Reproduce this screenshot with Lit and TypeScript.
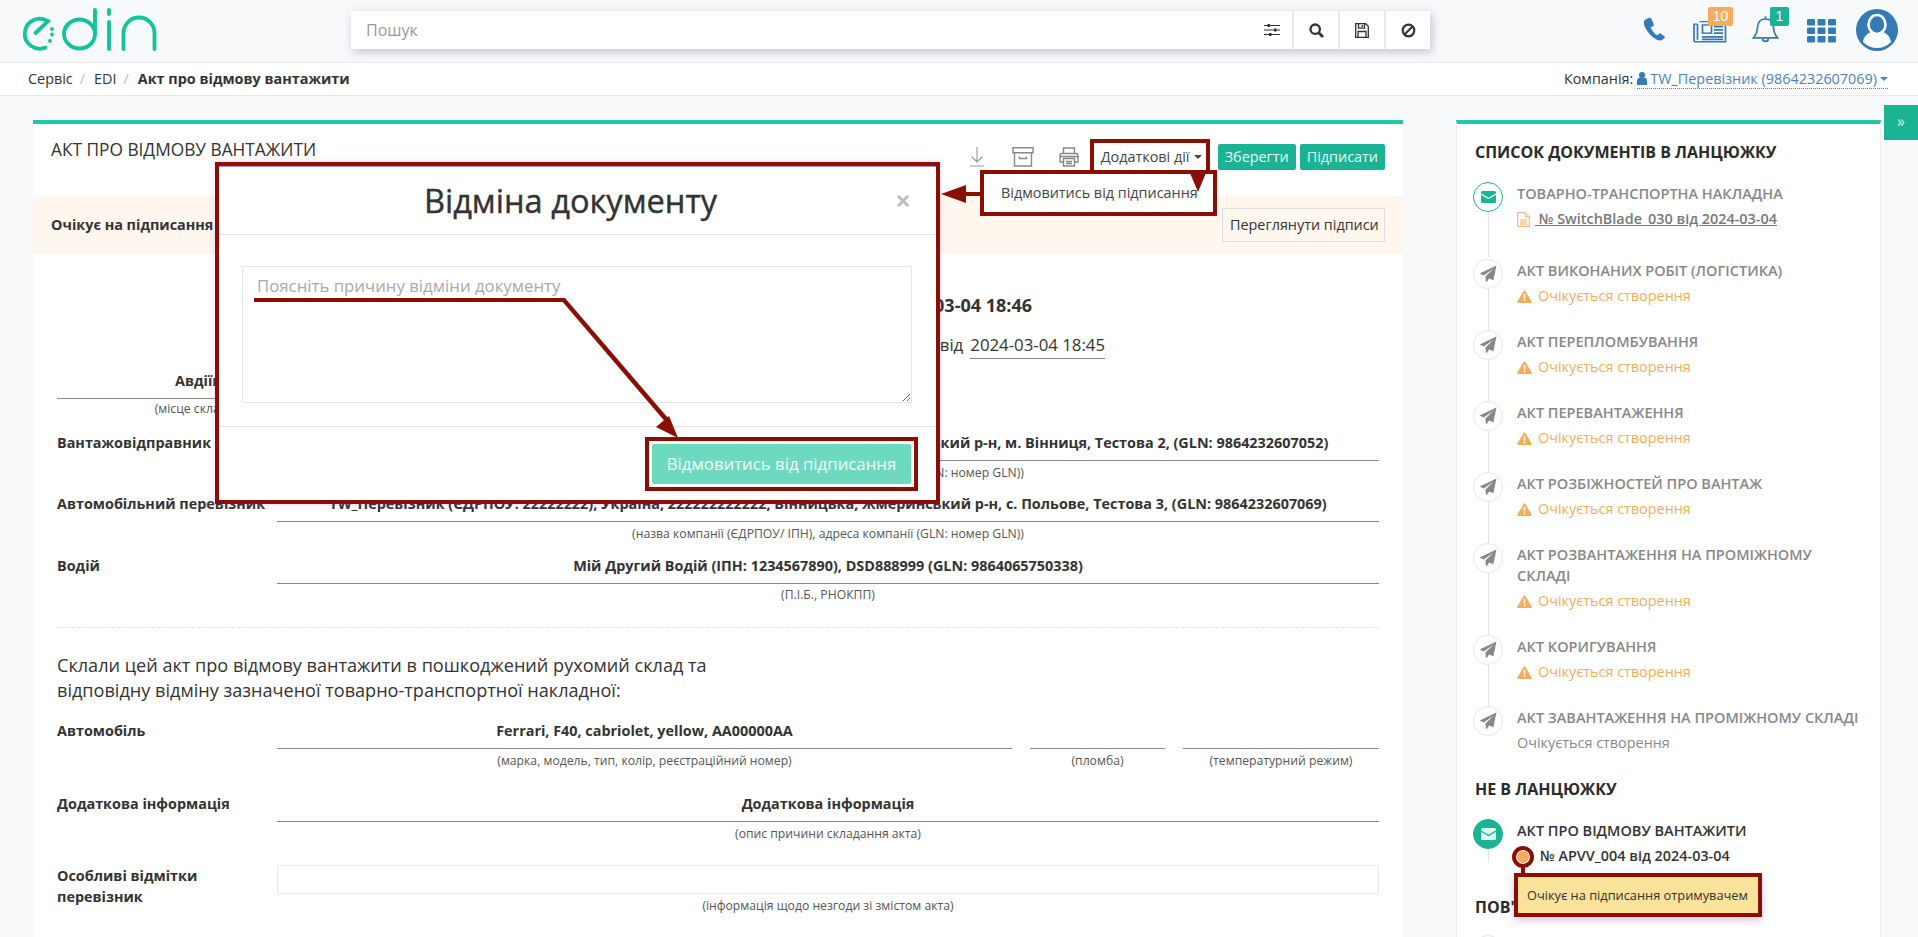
import { LitElement, html, css, svg } from 'lit';
import { customElement } from 'lit/decorators.js';

const teal = '#1ab394';
const navy = '#337ab7';

//
// icons, all hand drawn in a small box
//
const planeIcon = html`<svg width="18" height="18" viewBox="0 0 16 16"><path d="M15.5.5 12.8 13.6 8.9 11.9 7 15l-.9-.3-.4-4.4L13 3 4.3 9.3.5 7.6z" fill="#888"/></svg>`;
const mailIcon = (fill: string, cut: string) => html`<svg width="15" height="12" viewBox="0 0 15 12"><rect width="15" height="12" rx="1.5" fill="${fill}"/><path d="M0 3 7.5 7.5 15 3" fill="none" stroke="${cut}" stroke-width="1.4"/></svg>`;
const warnIcon = html`<svg width="15" height="13" viewBox="0 0 15 13"><path d="M7.5.3c.4 0 .7.2.9.6l6.3 10.6c.4.7 0 1.5-.9 1.5H1.2c-.9 0-1.3-.8-.9-1.5L6.6.9c.2-.4.5-.6.9-.6z" fill="#f8ac59"/><path d="M6.6 4h1.8l-.2 4.6H6.8zM6.7 9.6h1.6v1.6H6.7z" fill="#fff"/></svg>`;
const fileIcon = html`<svg width="13" height="15" viewBox="0 0 13 15" fill="none" stroke="#f8ac59" stroke-width="1"><path d="M.7.7h7.6l4 4v9.6H.7zM8.3.7v4h4M3 8h7M3 10h7M3 12h7"/></svg>`;

const logo = html`<svg class="logo" width="150" height="60" viewBox="10 0 150 60" fill="none" stroke="#12c39b" stroke-width="3.8" stroke-linecap="round">
  <path d="M35.5 33 48 21.2A15 15 0 1 0 45.5 47.6"/>
  <path d="M52 29v.1M52 34.4v.1M50 41v.1"/>
  <path d="M95 10V34a15.5 14.5 0 1 1-31 0 15.5 14.5 0 0 1 31 0"/>
  <path d="M109 10v4M109 22v27"/>
  <path d="M123.5 49V33a15.5 15.5 0 0 1 31 0V49"/>
</svg>`;

const searchIcons = [
  html`<svg width="16" height="14" viewBox="0 0 16 14" stroke="#333" fill="#333"><path d="M0 2.5h16M0 7h16M0 11.5h16" stroke-width="1"/><rect x="3.5" y="1" width="2.5" height="3" stroke="none"/><rect x="10" y="5.5" width="2.5" height="3" stroke="none"/><rect x="5" y="10" width="2.5" height="3" stroke="none"/></svg>`,
  html`<svg width="15" height="15" viewBox="0 0 15 15" fill="none" stroke="#333"><circle cx="6.2" cy="6.2" r="4.7" stroke-width="2.3"/><path d="M9.8 9.8 14 14" stroke-width="2.8"/></svg>`,
  html`<svg width="14" height="15" viewBox="0 0 14 15" fill="none" stroke="#333" stroke-width="1.3"><path d="M.7.7h10l2.6 2.6v11H.7z"/><path d="M3.5 1v4.2h6V1M3 14V8.5h8V14"/><path d="M7.2 2v2" stroke-width="1.5"/></svg>`,
  html`<svg width="15" height="15" viewBox="0 0 15 15" fill="none" stroke="#333" stroke-width="2.2"><circle cx="7.5" cy="7.5" r="5.8"/><path d="M3.5 11.5 11.5 3.5"/></svg>`,
];

const phoneIcon = html`<svg width="23" height="24" viewBox="0 0 25 29" preserveAspectRatio="none"><path d="M5.8 1.2 2.2 3.2C.6 4.300.4 7.500 1.900 11.500 4 17 8.800 23.600 14 26.900c2.800 1.700 5 1.800 6.400.8l3-2.300c.7-.6.6-1.300 0-1.900l-3.900-3.400c-.6-.5-1.200-.4-1.800 0l-2 1.500c-.5.300-1 .2-1.500-.2-2.300-1.900-4.500-5.200-5.600-8-.2-.5-.1-1 .4-1.300l2.200-1.300c.6-.4.800-1 .5-1.700L9 1.800c-.7-.9-2-1.300-3.200-.6z" fill="${navy}"/></svg>`;
const newsIcon = html`<svg width="34" height="23" viewBox="0 0 34 28" preserveAspectRatio="none" fill="none" stroke="${navy}" stroke-width="1.7"><path d="M6.500 2h26v24.500H3A2 2 0 0 1 1 24.500V5h3.500M4.500 5V24"/><rect x="9.500" y="6" width="9" height="10"/><path d="M21 8h9M21 12h9M21 16h9M9 20.500h21M9 23.500h21" stroke-width="2"/></svg>`;
const bellIcon = html`<svg width="27" height="29" viewBox="0 0 29 33" preserveAspectRatio="none" fill="none" stroke="${navy}" stroke-width="1.8"><path d="M14.500 1.500v3M14.500 4.500c-5.500 0-8.200 4-8.500 9-.3 6-1.800 9.500-4.500 12.500h26C24.800 23 23.300 19.500 23 13.500c-.3-5-3-9-8.500-9z"/><path d="M11.500 27a3 3 0 0 0 6 0" stroke-width="2"/></svg>`;
const gridIcon = html`<svg width="29" height="24" viewBox="0 0 29 24" fill="${navy}">${[0, 8.5, 17].map((y) => [0, 10.5, 21].map((x) => svg`<rect x="${x}" y="${y}" width="8" height="6.5" rx="1.2"/>`))}</svg>`;
const avatarIcon = html`<svg width="42" height="42" viewBox="0 0 42 42"><circle cx="21" cy="21" r="21" fill="${navy}"/><ellipse cx="21" cy="15.500" rx="8.500" ry="9.500" fill="none" stroke="#fff" stroke-width="2.6"/><path d="M7 33c1-6 5-9.500 9-10 2.500 2 7.500 2 10 0 4 .5 8 4 9 10a19.500 19.500 0 0 1-28 0z" fill="#fff"/></svg>`;

const downloadIcon = html`<svg width="16" height="20" viewBox="0 0 16 20" fill="none" stroke="#999" stroke-width="1.1"><path d="M8 0v15M2.500 9.500 8 15l5.500-5.500M1 19h14"/></svg>`;
const archiveIcon = html`<svg width="22" height="20" viewBox="0 0 22 20" fill="none" stroke="#888" stroke-width="1.4"><path d="M1 .8h20v5H1zM2.500 5.800V19h17V5.800M7.500 9.500v2h7v-2"/></svg>`;
const printIcon = html`<svg width="20" height="20" viewBox="0 0 20 20" fill="none" stroke="#888" stroke-width="1.4"><path d="M4.500 6.500V1h11v5.500M4.500 15H1V8a1.500 1.500 0 0 1 1.500-1.500h15A1.500 1.500 0 0 1 19 8v7h-3.500"/><path d="M4.500 11.500h11V19h-11zM7 14.500h6M7 16.500h6M1 9.500h18"/></svg>`;

// chain list, on the right
const chain = [
  { title: 'Акт виконаних робіт (логістика)', warn: true },
  { title: 'Акт переплом' + 'бування', warn: true },
  { title: 'Акт перевантаження', warn: true },
  { title: 'Акт розбіжностей про вантаж', warn: true },
  { title: 'Акт розвантаження на проміжному складі', warn: true },
  { title: 'Акт коригування', warn: true },
  { title: 'Акт завантаження на проміжному складі', warn: false },
];

const sender = 'TW_Відправник (ЄДРПОУ: 1111111111), Україна, 111111111111, Вінницька, Вінницький р-н, м. Вінниця, Тестова 2, (GLN: 9864232607052)';
const carrier = 'TW_Перевізник (ЄДРПОУ: 22222222), Україна, 222222222222, Вінницька, Жмеринський р-н, с. Польове, Тестова 3, (GLN: 9864232607069)';
const companyHint = '(назва компанії (ЄДРПОУ/ ІПН), адреса компанії (GLN: номер GLN))';

@customElement('app-root')
export class AppRoot extends LitElement {
  static styles = css`
    :host {
      display: block;
      height: 937px;
      position: relative;
      overflow: hidden;
      background: #f8f9fb;
      color: #333;
      font: 14.4px/20px "Open Sans", sans-serif;
    }
    * { box-sizing: border-box; }

    .topbar {
      height: 63px;
      display: flex;
      align-items: flex-start;
      border-bottom: 1px solid #e7e8ec;
    }
    .logo { display: block; flex: none; margin: 0 0 0 10px; }
    .search {
      width: 1079px;
      height: 38px;
      margin: 11px 0 0 191px;
      flex: none;
      display: flex;
      background: #fff;
      box-shadow: 2px 3px 9px rgba(90, 95, 130, .35);
    }
    .search input {
      flex: 1;
      min-width: 0;
      border: 0;
      outline: 0;
      padding: 0 15px;
      background: transparent;
      font: 16px "Open Sans", sans-serif;
    }
    .search input::placeholder { color: #999; opacity: 1; }
    .search button {
      width: 46px;
      padding: 0;
      background: #fff;
      border: 0;
      border-left: 2px solid #e9e9ec;
      display: flex;
      align-items: center;
      justify-content: center;
    }
    .search button:first-of-type { border-left: 0; padding-left: 5px; }
    .tools { display: flex; align-items: flex-start; margin-left: 212px; }
    .tool { position: relative; display: flex; align-items: center; justify-content: center; }
    .tool.phone { width: 25px; height: 24px; margin-top: 17px; }
    .tool.news { width: 34px; height: 23px; margin: 20px 0 0 26px; }
    .tool.bell { width: 29px; height: 29px; margin: 15px 0 0 24px; }
    .tool.grid { width: 29px; height: 24px; margin: 19px 0 0 27px; }
    .tool.avatar { width: 42px; height: 42px; margin: 9px 0 0 20px; }
    .badge {
      position: absolute;
      border-radius: 2px;
      color: #fff;
      font: 14px/19px "Liberation Sans", sans-serif;
      height: 19px;
      text-align: center;
    }
    .badge.count { left: 15px; top: -13px; width: 25px; background: #f8ac59; }
    .badge.alert { left: 19px; top: -8px; width: 19px; background: #1ab394; }

    .crumbs {
      height: 33px;
      background: #fff;
      border-bottom: 1px solid #e7e8ec;
      display: flex;
      align-items: center;
      padding: 0 30px 0 28px;
    }
    .crumbs i { font-style: normal; color: #bbb; margin: 0 9px 0 7px; }
    .crumbs b { font-weight: 700; }
    .company { margin-left: auto; display: flex; align-items: center; }
    .company a {
      color: #4a83c0;
      margin-left: 4px;
      display: flex;
      align-items: center;
      gap: 3px;
      border-bottom: 1px dotted #337ab7;
      line-height: 19px;
    }
    .caret { width: 0; height: 0; border: 4px solid transparent; border-top-color: currentColor; border-bottom: 0; display: inline-block; }

    .content { display: flex; padding: 24px 0 0 33px; gap: 53px; align-items: flex-start; }
    .main { width: 1370px; flex: none; background: #fff; border-top: 4px solid #22c7a7; height: 820px; }
    .head { height: 72px; display: flex; align-items: flex-start; padding: 0 18px; }
    .head h1 { margin: 15px 0 0; font: 400 17.3px/22px "Open Sans", sans-serif; flex: 1; }
    .actions { display: flex; align-items: center; margin-top: 20px; }
    .actions svg { display: block; }
    .act { width: 46px; display: flex; justify-content: center; }
    .act.end { margin-right: 2px; }
    .btn {
      height: 26px;
      padding: 0 7px;
      border-radius: 2px;
      line-height: 26px;
      margin-left: 4px;
      background: #1ab394;
      color: #e8fbf6;
      white-space: nowrap;
    }
    .btn.save { margin-left: 0; }
    .btn.plain { background: #fff; color: #444; margin: 0 12px 0 0; width: 112px; display: flex; align-items: center; gap: 4px; padding: 0 7px; }
    .band {
      height: 58px;
      background: #fff6ee;
      display: flex;
      align-items: center;
      justify-content: space-between;
      padding: 0 18px;
    }
    .band b { font-weight: 700; }
    .band span { border: 1px solid #ddd; height: 34px; line-height: 32px; padding: 0 7px; width: 163px; white-space: nowrap; }

    .form { padding: 39px 24px 0; }
    .doc-title { text-align: right; padding-right: 347px; font: 700 18px/24px "Open Sans", sans-serif; }
    .doc-date { display: flex; justify-content: flex-end; gap: 7px; padding-right: 274px; margin-top: 15px; font-size: 16.8px; line-height: 26px; }
    .doc-date u { text-decoration: none; border-bottom: 1px solid #888; }
    .place { width: 300px; margin-top: 5px; text-align: center; }
    .hint { font-size: 12.2px; line-height: 24px; text-align: center; color: #555; white-space: nowrap; }
    .hint.short { line-height: 20px; }
    .hint.mid { line-height: 22px; }
    .row { display: grid; grid-template-columns: 220px 1fr; margin-bottom: 2px; }
    .row.first { margin-top: 7px; }
    .row.tight { margin-top: 3px; }
    .row label { font-weight: 700; line-height: 33px; white-space: nowrap; }
    .val { height: 35px; border-bottom: 1px solid #888; line-height: 33px; font-weight: 700; text-align: center; white-space: nowrap; overflow: hidden; }
    .rule { border-top: 1px dashed #e4e4e4; margin: 21px 0 25px; }
    .lead { font-size: 18.1px; line-height: 25px; margin: 0 0 11px; }
    .triple { display: grid; grid-template-columns: 735px 135px 196px; gap: 18px; }
    .row.extra { margin-top: 14px; }
    .row.marks { margin-top: 19px; }
    .row.marks label { line-height: 21px; }
    .box { height: 29px; border: 1px solid #e7e7e7; }

    .side {
      width: 425px;
      flex: none;
      height: 820px;
      background: #fff;
      border: 1px solid #ededf0;
      border-top: 4px solid #22c7a7;
      padding: 17px 0 0 16px;
    }
    .side h2 { margin: 0 0 20px 2px; font: 700 16px/22px "Open Sans", sans-serif; text-transform: uppercase; color: #2b2b2b; }
    .side h2.tail { margin-bottom: 18px; }
    .step { display: flex; gap: 14px; margin-bottom: 25px; position: relative; }
    .step::before { content: ""; position: absolute; left: 14.5px; top: 28px; bottom: -28px; width: 1px; background: #e3e3e3; }
    .step.last::before { display: none; }
    .step.alone { margin-bottom: 30px; }
    .step.alone::before { bottom: 4px; top: 20px; }
    .step.wide { margin-bottom: 31px; }
    .dot {
      width: 30px;
      height: 30px;
      margin-top: -1px;
      border-radius: 50%;
      border: 1px solid #e8e8e8;
      background: #fff;
      display: flex;
      align-items: center;
      justify-content: center;
      flex: none;
      position: relative;
    }
    .dot.on { border-color: #1ab394; }
    .dot.full { background: #1ab394; border-color: #1ab394; }
    .ttl { font: 600 14.5px/21px "Open Sans", sans-serif; text-transform: uppercase; color: #888; margin-right: 19px; }
    .ttl.dark { color: #333; }
    .sub { margin-top: 5px; display: flex; align-items: center; gap: 6px; color: #f8ac59; }
    .sub.grey { color: #888; }
    .sub a { color: #777; font-weight: 600; text-decoration: underline; margin-left: -1px; white-space: pre; }
    .sub b { font-weight: 600; color: #333; margin-left: 23px; }

    .toggle {
      position: absolute;
      right: 0;
      top: 105px;
      width: 34px;
      height: 35px;
      background: #1ab394;
      color: #cdf3ea;
      text-align: center;
      line-height: 33px;
      font-size: 16px;
    }

    /* the dialog and the red marks drawn over the screenshot */
    .modal {
      position: absolute;
      left: 215px;
      top: 162px;
      width: 725px;
      height: 342px;
      background: #fff;
      border: 4px solid #8b0e04;
      box-shadow: 0 0 6px rgba(170, 80, 220, .25);
      display: flex;
      flex-direction: column;
    }
    .m-head {
      height: 69px;
      flex: none;
      border-bottom: 1px solid #e5e5e5;
      border-top: 1px solid #b98ad0;
      display: flex;
      align-items: center;
      justify-content: center;
      padding-right: 14px;
      font-size: 32.6px;
      font-weight: 400;
      -webkit-text-stroke: .4px #333;
      position: relative;
      color: #333;
    }
    .m-close { position: absolute; right: 26px; top: 21px; color: #bbb; font: 700 24px/26px "Liberation Sans", sans-serif; -webkit-text-stroke: 0; }
    .m-body { height: 192px; flex: none; padding: 31px 24px 0 23px; border-bottom: 1px solid #e5e5e5; }
    .m-body textarea {
      display: block;
      width: 100%;
      height: 137px;
      border: 1px solid #e5e6e7;
      border-radius: 1px;
      padding: 7px 14px;
      outline: 0;
      font: 16.8px/24px "Open Sans", sans-serif;
    }
    .m-body textarea::placeholder { color: #aaa; opacity: 1; }
    .m-foot { flex: 1; display: flex; justify-content: flex-end; padding: 10px 18px 0 0; }
    .m-btn { width: 273px; height: 54px; border: 4px solid #8b0e04; padding: 3px; }
    .m-btn div {
      height: 100%;
      background: #6ddac0;
      border-radius: 2px;
      color: #f1fffb;
      font-size: 16.8px;
      line-height: 40px;
      text-align: center;
      white-space: nowrap;
    }
    .mark { position: absolute; border: 4px solid #8b0e04; }
    .mark.more { left: 1090px; top: 139px; width: 120px; height: 34px; border-bottom: 0; }
    .mark.menu {
      left: 980px;
      top: 170px;
      width: 237px;
      height: 46px;
      background: #fff;
      padding-left: 17px;
      line-height: 38px;
      white-space: nowrap;
      color: #444;
    }
    .ink { position: absolute; left: 0; top: 0; pointer-events: none; }
    .tip {
      left: 1514px;
      top: 873px;
      width: 248px;
      height: 44px;
      background: #fbe29a;
      font-size: 12.8px;
      line-height: 36px;
      padding-left: 9px;
      white-space: nowrap;
      box-shadow: 0 3px 8px rgba(120, 60, 160, .3);
    }
    .pin {
      left: 1512px;
      top: 846px;
      width: 22px;
      height: 22px;
      border-radius: 50%;
      background: #f8ac59;
      box-shadow: inset 0 0 0 1px #fff;
    }
  `;

  render() {
    return html`
      <div class="topbar">
        ${logo}
        <div class="search">
          <input placeholder="Пошук" />
          ${searchIcons.map((icon) => html`<button>${icon}</button>`)}
        </div>
        <div class="tools">
          <div class="tool phone">${phoneIcon}</div>
          <div class="tool news">${newsIcon}<span class="badge count">10</span></div>
          <div class="tool bell">${bellIcon}<span class="badge alert">1</span></div>
          <div class="tool grid">${gridIcon}</div>
          <div class="tool avatar">${avatarIcon}</div>
        </div>
      </div>
      <div class="crumbs">
        <span>Сервіс</span><i>/</i><span>EDI</span><i>/</i><b>Акт про відмову вантажити</b>
        <div class="company">Компанія:
          <a><svg width="10" height="13" viewBox="0 0 10 13" fill="#337ab7"><circle cx="5" cy="3" r="3"/><path d="M0 13V9c0-2 1.500-3.500 3-3.500h4C8.500 5.500 10 7 10 9v4z"/></svg>TW_Перевізник (9864232607069) <span class="caret"></span></a>
        </div>
      </div>

      <div class="content">
        <section class="main">
          <div class="head">
            <h1>АКТ ПРО ВІДМОВУ ВАНТАЖИТИ</h1>
            <div class="actions">
              <span class="act">${downloadIcon}</span><span class="act">${archiveIcon}</span><span class="act end">${printIcon}</span>
              <span class="btn plain">Додаткові дії <span class="caret"></span></span>
              <span class="btn save">Зберегти</span>
              <span class="btn">Підписати</span>
            </div>
          </div>
          <div class="band"><b>Очікує на підписання</b><span>Переглянути підписи</span></div>
          <div class="form">
            <div class="doc-title">Акт про відмову № APVV_004 від 2024-03-04 18:46</div>
            <div class="doc-date"><span>від</span><u>2024-03-04 18:45</u></div>
            <div class="place"><div class="val">Авдіївка</div><div class="hint short">(місце складання)</div></div>
            <div class="row first"><label>Вантажовідправник</label><div><div class="val">${sender}</div><div class="hint">${companyHint}</div></div></div>
            <div class="row"><label>Автомобільний перевізник</label><div><div class="val">${carrier}</div><div class="hint">${companyHint}</div></div></div>
            <div class="row tight"><label>Водій</label><div><div class="val">Мій Другий Водій (ІПН: 1234567890), DSD888999 (GLN: 9864065750338)</div><div class="hint mid">(П.І.Б., РНОКПП)</div></div></div>
            <div class="rule"></div>
            <p class="lead">Склали цей акт про відмову вантажити в пошкоджений рухомий склад та<br />відповідну відміну зазначеної товарно-транспортної накладної:</p>
            <div class="row"><label>Автомобіль</label>
              <div class="triple">
                <div><div class="val">Ferrari, F40, cabriolet, yellow, AA00000AA</div><div class="hint">(марка, модель, тип, колір, реєстраційний номер)</div></div>
                <div><div class="val"></div><div class="hint">(пломба)</div></div>
                <div><div class="val"></div><div class="hint">(температурний режим)</div></div>
              </div>
            </div>
            <div class="row extra"><label>Додаткова інформація</label><div><div class="val">Додаткова інформація</div><div class="hint">(опис причини складання акта)</div></div></div>
            <div class="row marks"><label>Особливі відмітки<br />перевізник</label><div><div class="box"></div><div class="hint">(інформація щодо незгоди зі змістом акта)</div></div></div>
          </div>
        </section>

        <aside class="side">
          <h2>Список документів в ланцюжку</h2>
          <div class="step wide">
            <span class="dot on">${mailIcon(teal, '#fff')}</span>
            <div><div class="ttl">Товарно-транспортна накладна</div><div class="sub">${fileIcon}<a> № SwitchBlade_030 від 2024-03-04</a></div></div>
          </div>
          ${chain.map((item, i) => html`
            <div class="step ${i === chain.length - 1 ? 'last' : ''}">
              <span class="dot">${planeIcon}</span>
              <div>
                <div class="ttl">${item.title}</div>
                <div class="sub ${item.warn ? '' : 'grey'}">${item.warn ? warnIcon : ''}<span>Очікується створення</span></div>
              </div>
            </div>`)}
          <h2>Не в ланцюжку</h2>
          <div class="step alone">
            <span class="dot full">${mailIcon('#dff7f1', teal)}</span>
            <div><div class="ttl dark">Акт про відмову вантажити</div><div class="sub"><b>№ APVV_004 від 2024-03-04</b></div></div>
          </div>
          <h2 class="tail">Пов'язані документи</h2>
          <div class="step last"><span class="dot">${planeIcon}</span></div>
        </aside>
      </div>

      <div class="toggle">»</div>

      <div class="modal">
        <div class="m-head">Відміна документу<span class="m-close">×</span></div>
        <div class="m-body"><textarea placeholder="Поясніть причину відміни документу"></textarea></div>
        <div class="m-foot"><div class="m-btn"><div>Відмовитись від підписання</div></div></div>
      </div>

      <div class="mark more"></div>
      <div class="mark menu">Відмовитись від підписання</div>
      <div class="mark pin"></div>
      <div class="mark tip">Очікує на підписання отримувачем</div>

      <svg class="ink" width="1918" height="937" fill="#8b0e04" stroke="none">
        <path d="M941 194 966 185v7h14v4h-14v7z"/>
        <path d="M1190 173h16l-8 19z"/>
        <path d="M254 298h311v4H254z"/>
        <path d="M561 300 565 298 668 418l-3.500 3z"/>
        <path d="M656 427 669 416 678 438z"/>
        <path d="M1521 866h4v8h-4z"/>
      </svg>
    `;
  }
}
